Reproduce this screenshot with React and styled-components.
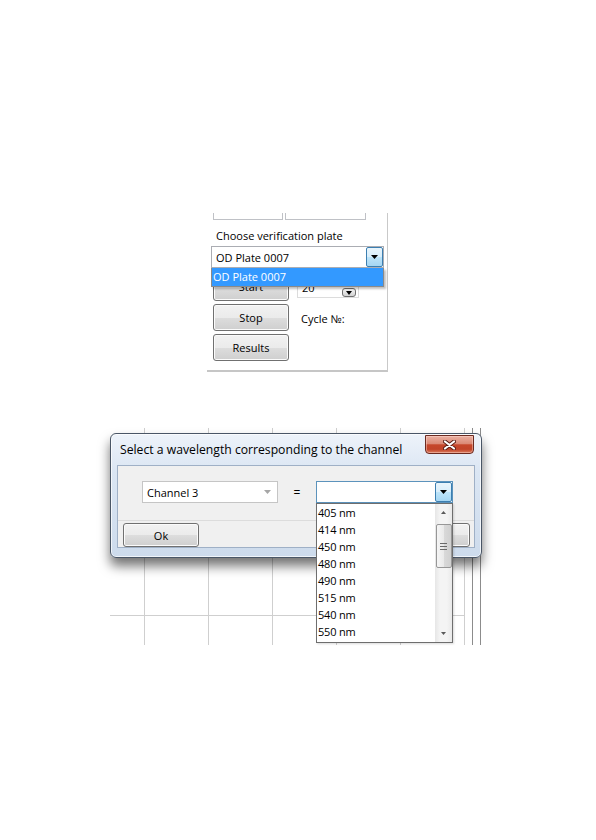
import React from "react";
import styled, { createGlobalStyle } from "styled-components";

const font = `"Open Sans", "Noto Sans", sans-serif`;

const Global = createGlobalStyle`
  html, body { margin: 0; padding: 0; background: #fff; }
  * { box-sizing: border-box; }
`;

const Page = styled.div`
  width: 596px;
  height: 840px;
  display: flex;
  flex-direction: column;
  font-family: ${font};
  color: #000;
`;

/* ---------- top screenshot ---------- */
const TopPanel = styled.div`
  position: relative;
  margin: 213px 0 0 207px;
  width: 181px;
  height: 159px;
  border-right: 1px solid #c9c9c9;
  border-bottom: 2px solid #c6c6c6;
  display: flex;
  flex-direction: column;
`;

const BoxRow = styled.div`
  display: flex;
  gap: 2px;
  margin-left: 6px;
  height: 7px;
`;

const StubBox = styled.div`
  width: ${(p) => p.$w}px;
  height: 7px;
  border: 1px solid #bfc1c6;
  border-top: none;
  background: #fff;
`;

const Label = styled.div`
  font-size: 11px;
  line-height: 15px;
  height: 15px;
  margin: ${(p) => p.$m || "0"};
  white-space: nowrap;
`;

const Combo = styled.div`
  position: relative;
  width: ${(p) => p.$w}px;
  height: 22px;
  margin: ${(p) => p.$m || "0"};
  border: 1px solid ${(p) => p.$border || "#abadb3"};
  background: #fff;
  display: flex;
  align-items: center;
  padding-left: ${(p) => p.$pl || 4}px;
  font-size: 11px;
  white-space: nowrap;
`;

const ArrowBtn = styled.div`
  position: absolute;
  right: 0;
  top: 0;
  bottom: 0;
  width: 17px;
  border: 1px solid #3c7fb1;
  border-radius: 2px;
  background: linear-gradient(#e9f5fc 0%, #d8eefb 48%, #bde4f9 52%, #a5d6f3 100%);
  display: flex;
  align-items: center;
  justify-content: center;
`;

const GrayArrow = styled.div`
  position: absolute;
  right: 6px;
  top: 0;
  bottom: 0;
  display: flex;
  align-items: center;
`;

const Controls = styled.div`
  display: flex;
  margin-top: 6px;
`;

const ButtonCol = styled.div`
  display: flex;
  flex-direction: column;
  gap: 3px;
  margin-left: 6px;
`;

const WinButton = styled.div`
  width: 76px;
  height: ${(p) => p.$h || 27}px;
  border: 1px solid #707070;
  border-radius: 3px;
  background: linear-gradient(#f2f2f2 0%, #ebebeb 50%, #dddddd 51%, #cfcfcf 100%);
  box-shadow: inset 0 0 0 1px #fbfbfb;
  display: flex;
  align-items: center;
  justify-content: center;
  font-size: 11px;
  color: #000;
  padding-bottom: ${(p) => p.$pb || 0}px;
`;

const RightCol = styled.div`
  display: flex;
  flex-direction: column;
  margin-left: 8px;
  padding-top: 2px;
`;

const Spinner = styled.div`
  position: relative;
  width: 62px;
  height: 22px;
  border: 1px solid #dcdcdc;
  background: #fff;
  font-size: 11px;
  padding-left: 4px;
  display: flex;
  align-items: center;
`;

const SpinBtn = styled.div`
  position: absolute;
  right: 2px;
  top: 11px;
  width: 14px;
  height: 9px;
  border: 1px solid #707070;
  border-radius: 3px;
  background: linear-gradient(#f4f4f4, #d2d2d2);
  display: flex;
  align-items: center;
  justify-content: center;
`;

const TopDrop = styled.div`
  position: absolute;
  left: 4px;
  top: 55px;
  width: 173px;
  height: 19px;
  border: 1px solid #8a8a8a;
  border-top: none;
  background: #fff;
  box-shadow: 2px 2px 2px rgba(0, 0, 0, 0.25);
`;

const DropItem = styled.div`
  height: 18px;
  background: #3399ff;
  color: #fff;
  font-size: 11px;
  line-height: 18px;
  padding-left: 1px;
`;

/* ---------- bottom screenshot ---------- */
const Desk = styled.div`
  position: relative;
  margin: 56px 0 0 110px;
  width: 373px;
  height: 217px;
  padding-top: 5px;
  background-color: #fff;
  background-image: linear-gradient(to right, #cfcfcf 1px, transparent 1px),
    linear-gradient(#cfcfcf, #cfcfcf),
    linear-gradient(#8c8c8c, #8c8c8c),
    linear-gradient(#8c8c8c, #8c8c8c);
  background-size: 64px 100%, 354px 1px, 1px 100%, 1px 100%;
  background-position: 34px 0, 0 187px, 362px 0, 370px 0;
  background-repeat: repeat-x, no-repeat, no-repeat, no-repeat;
`;

const Dialog = styled.div`
  width: 372px;
  height: 125px;
  border: 1px solid #4a5666;
  border-radius: 6px;
  background: linear-gradient(#eef3fa 0%, #dbe6f3 30%, #cddbec 100%);
  box-shadow: inset 0 0 0 1px rgba(255, 255, 255, 0.7), 0 8px 12px rgba(0, 0, 0, 0.55);
  padding: 0 6px 9px 6px;
  display: flex;
  flex-direction: column;
`;

const TitleBar = styled.div`
  height: 31px;
  display: flex;
  justify-content: space-between;
  align-items: flex-start;
`;

const Title = styled.div`
  margin: 8px 0 0 3px;
  font-size: 12.2px;
  line-height: 16px;
  white-space: nowrap;
`;

const CloseBtn = styled.div`
  width: 49px;
  height: 19px;
  margin: 1px 1px 0 0;
  border: 1px solid #6b2a20;
  border-radius: 0 0 4px 4px;
  background: linear-gradient(#eab0a2 0%, #db8a76 45%, #c6472b 52%, #c14429 78%, #dc7d5e 100%);
  box-shadow: inset 0 0 0 1px rgba(255, 220, 210, 0.45);
  display: flex;
  align-items: center;
  justify-content: center;
`;

const Client = styled.div`
  flex: 1;
  border: 1px solid #9fb0c6;
  background: #f0f0f0;
  display: flex;
  flex-direction: column;
`;

const FieldRow = styled.div`
  height: 54px;
  display: flex;
  padding: 15px 0 0 24px;
`;

const Eq = styled.div`
  width: 38px;
  height: 22px;
  display: flex;
  align-items: center;
  justify-content: center;
  font-size: 12px;
`;

const ButtonBar = styled.div`
  flex: 1;
  border-top: 1px solid #dcdcdc;
  display: flex;
  justify-content: space-between;
  padding: 2px 4px 0 5px;
`;

const ListBox = styled.div`
  position: absolute;
  left: 206px;
  top: 75px;
  width: 137px;
  height: 140px;
  border: 1px solid #6e6e6e;
  background: #fff;
  display: flex;
  box-shadow: 1px 1px 2px rgba(0, 0, 0, 0.15);
`;

const Items = styled.div`
  flex: 1;
  display: flex;
  flex-direction: column;
`;

const Item = styled.div`
  height: 17px;
  line-height: 17px;
  padding-left: 1px;
  font-size: 11px;
  letter-spacing: -0.2px;
`;

const ScrollBar = styled.div`
  width: 17px;
  background: linear-gradient(to right, #e6e6e6, #f4f4f4 30%, #f4f4f4 70%, #e9e9e9);
  display: flex;
  flex-direction: column;
  align-items: center;
`;

const ScrollArrow = styled.div`
  width: 17px;
  height: 17px;
  display: flex;
  align-items: center;
  justify-content: center;
`;

const Thumb = styled.div`
  width: 16px;
  height: 44px;
  margin-top: 3px;
  border: 1px solid #979797;
  border-radius: 2px;
  background: linear-gradient(to right, #f5f5f5, #e9e9e9 50%, #d9d9d9 51%, #d0d0d0);
  display: flex;
  align-items: center;
  justify-content: center;
`;

const Spacer = styled.div`
  flex: 1;
`;

const Tri = ({ down = true, color = "#000", w = 7, h = 4 }) => (
  <svg width={w} height={h} viewBox={`0 0 ${w} ${h}`}>
    <polygon
      points={down ? `0,0 ${w},0 ${w / 2},${h}` : `0,${h} ${w},${h} ${w / 2},0`}
      fill={color}
    />
  </svg>
);

const CloseX = () => (
  <svg width="13" height="10" viewBox="0 0 13 10">
    <path d="M2 1.5 L11 8.5 M11 1.5 L2 8.5" stroke="#5a1d14" strokeWidth="4" strokeLinecap="round" />
    <path d="M2 1.5 L11 8.5 M11 1.5 L2 8.5" stroke="#fff" strokeWidth="2.2" strokeLinecap="round" />
  </svg>
);

const Grip = () => (
  <svg width="7" height="7" viewBox="0 0 7 7">
    <path d="M0 0.5 H7 M0 3.5 H7 M0 6.5 H7" stroke="#6a6a6a" strokeWidth="1" />
  </svg>
);

const waves = ["405 nm", "414 nm", "450 nm", "480 nm", "490 nm", "515 nm", "540 nm", "550 nm"];

export default function App() {
  return (
    <Page>
      <Global />
      <TopPanel>
        <BoxRow>
          <StubBox $w={70} />
          <StubBox $w={81} />
        </BoxRow>
        <Label $m="8px 0 0 9px">Choose verification plate</Label>
        <Combo $w={173} $m="3px 0 0 4px">
          OD Plate 0007
          <ArrowBtn>
            <Tri />
          </ArrowBtn>
        </Combo>
        <Controls>
          <ButtonCol>
            <WinButton $pb={3}>Start</WinButton>
            <WinButton>Stop</WinButton>
            <WinButton>Results</WinButton>
          </ButtonCol>
          <RightCol>
            <Spinner>
              20
              <SpinBtn>
                <Tri w={6} h={4} />
              </SpinBtn>
            </Spinner>
            <Label $m="13px 0 0 4px">Cycle №:</Label>
          </RightCol>
        </Controls>
        <TopDrop>
          <DropItem>OD Plate 0007</DropItem>
        </TopDrop>
      </TopPanel>

      <Desk>
        <Dialog>
          <TitleBar>
            <Title>Select a wavelength corresponding to the channel</Title>
            <CloseBtn>
              <CloseX />
            </CloseBtn>
          </TitleBar>
          <Client>
            <FieldRow>
              <Combo $w={136} $border="#c5c5c5">
                Channel 3
                <GrayArrow>
                  <Tri color="#a6a6a6" />
                </GrayArrow>
              </Combo>
              <Eq>=</Eq>
              <Combo $w={137} $border="#5c93bc">
                <ArrowBtn>
                  <Tri />
                </ArrowBtn>
              </Combo>
            </FieldRow>
            <ButtonBar>
              <WinButton $h={24}>Ok</WinButton>
              <WinButton $h={24}>Cancel</WinButton>
            </ButtonBar>
          </Client>
        </Dialog>
        <ListBox>
          <Items>
            {waves.map((w) => (
              <Item key={w}>{w}</Item>
            ))}
          </Items>
          <ScrollBar>
            <ScrollArrow>
              <Tri down={false} color="#5a5a5a" w={5} h={3} />
            </ScrollArrow>
            <Thumb>
              <Grip />
            </Thumb>
            <Spacer />
            <ScrollArrow>
              <Tri color="#5a5a5a" w={5} h={3} />
            </ScrollArrow>
          </ScrollBar>
        </ListBox>
      </Desk>
    </Page>
  );
}
